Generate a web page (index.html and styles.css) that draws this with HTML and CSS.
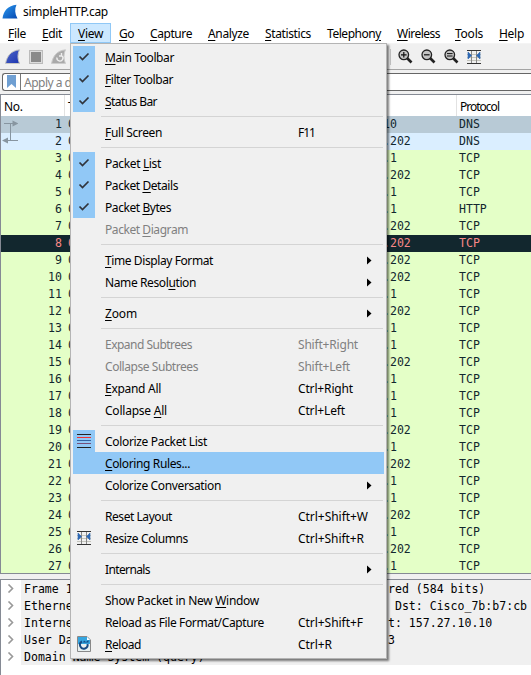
FILE: index.html
```
<!DOCTYPE html>
<html lang="en">
<head>
<meta charset="utf-8">
<title>simpleHTTP.cap</title>
<link rel="stylesheet" href="styles.css">
</head>
<body>
<svg class="defs" width="0" height="0">
  <defs>
    <linearGradient id="finBlue" x1="0" y1="0" x2="1" y2="1"><stop offset="0" stop-color="#2b9cf2"/><stop offset="1" stop-color="#0647b0"/></linearGradient>
    <linearGradient id="finNavy" x1="0" y1="0" x2="1" y2="1"><stop offset="0" stop-color="#5068c8"/><stop offset="1" stop-color="#1c34b0"/></linearGradient>
  </defs>
  <symbol id="resize" viewBox="0 0 14 14">
    <path d="M0 4.500H14M0 7.500H14M0 10.500H14" stroke="#c4c4bc"/>
    <path d="M0 .5H14M0 13.500H14" stroke="#333"/>
    <path d="M4.500 1V13M9.500 1V13" stroke="#888"/>
    <path d="M1 2L4.500 5.500L1 9ZM13 2L9.500 5.500L13 9Z" fill="#2e68b4" stroke="#2e68b4" stroke-width=".6"/>
  </symbol>
  <symbol id="lens" viewBox="0 0 15 15">
    <path d="M9 9L13.500 13.500" stroke="#222" stroke-width="2.600"/>
    <circle cx="5.800" cy="5.800" r="4.800" fill="#c4c4c4" stroke="#222" stroke-width="1.300"/>
  </symbol>
</svg>
<header class="titlebar">
  <svg width="16" height="16" viewBox="0 0 16 16"><path d="M.5 14.500C1.500 7 6 1.500 14.500.8C12.500 5 12.800 10 15.500 14.500Z" fill="url(#finBlue)"/></svg>
  <span data-w="85">simpleHTTP.cap</span>
</header>
<nav class="menubar" id="menubar"></nav>
<div class="toolbar">
  <svg class="tb1" width="16" height="16" viewBox="0 0 16 16"><path d="M.5 14.500C2 7 6 1.500 14.500.8C12.500 5 12.500 10 14.500 14.500Z" fill="url(#finNavy)" stroke="#c8c8c4"/></svg>
  <svg class="tb2" width="14" height="14"><rect x=".5" y=".5" width="13" height="13" fill="#ddd" stroke="#bbb"/><rect x="2" y="2" width="10" height="10" fill="#8a8a8a"/></svg>
  <svg class="tb3" width="16" height="16" viewBox="0 0 16 16"><path d="M.5 14.500C2 7 6 1.500 14.500.8C12.500 5 12.500 10 14.500 14.500Z" fill="#aaa" stroke="#ccc"/><path d="M10.500 6.500A3 3 0 1 1 6 8.500M10.500 4V7H8" fill="none" stroke="#eee" stroke-width="1.400"/></svg>
  <i class="tbsep"></i>
  <svg class="z" width="15" height="15"><use href="#lens"/><path d="M3 5.800H8.600M5.800 3V8.600" stroke="#111" stroke-width="1.200"/></svg>
  <svg class="z" width="15" height="15"><use href="#lens"/><path d="M3 5.800H8.600" stroke="#111" stroke-width="1.200"/></svg>
  <svg class="z" width="15" height="15"><use href="#lens"/><path d="M3 4.600H8.600M3 7H8.600" stroke="#111"/></svg>
  <svg width="14" height="14"><use href="#resize"/></svg>
</div>
<div class="filterbar"><div class="filter">
  <span class="mark"><svg width="9" height="13"><path d="M0 0H9V13L4.500 9L0 13Z" fill="#6f9fd2"/></svg></span>
  <span class="hint">Apply a display filter</span>
</div></div>
<section class="packets">
  <div class="head"><span class="no">No.</span><span class="time">Time</span><span class="dst"></span><span class="proto"><b data-w="39">Protocol</b></span></div>
  <div class="rows" id="rows"></div>
  <svg class="flow" width="17" height="28"><path d="M3 6.500H12M9.500 7V23.500M6 23.500H17" stroke="#8795a0" fill="none"/><path d="M11.500 3.500L17.500 6.500L11.500 9.500ZM7 20.500L1 23.500L7 26.500Z" fill="#8795a0"/></svg>
</section>
<section class="details" id="details"></section>
<div class="menu" id="menu"></div>
<script src="app.js"></script>
</body>
</html>
```
FILE: styles.css
```
* { box-sizing: border-box; }
body { margin: 0; width: 531px; height: 675px; overflow: hidden; background: #f0f0f0; color: #000; font: 12px/16px "Noto Sans", "Open Sans", sans-serif; display: flex; flex-direction: column; position: relative; }
svg { display: block; flex: none; }
.defs { position: absolute; }
span { white-space: pre; }
b { font-weight: 400; }
u { text-decoration: underline; text-decoration-thickness: 1px; text-underline-offset: 2px; }
.titlebar { flex: none; height: 23px; background: #fff; display: flex; align-items: center; gap: 5px; padding: 1px 0 0 2px; }
.menubar { flex: none; height: 21px; background: #fff; border-bottom: 1px solid #f4f4f4; display: flex; }
.menubar > span { height: 20px; line-height: 22px; padding-left: 8px; flex: none; }
.menubar .open { background: #cce8ff; box-shadow: inset 0 0 0 1px #90c8f6; }
.toolbar { flex: none; height: 26px; border-bottom: 1px solid #a4a4a4; display: flex; align-items: center; padding-left: 5px; }
.tb1 { margin-right: 8px; }
.tb2 { margin-right: 8px; }
.tbsep { width: 1px; height: 16px; background: #c4c4c4; margin: 0 7px 0 323px; }
.z { margin-right: 8px; }
.filterbar { flex: none; height: 24px; padding: 3px 0 2px 2px; }
.filter { height: 18px; background: #fff; border: 1px solid #666; border-radius: 3px 0 0 3px; border-right: 0; display: flex; }
.mark { width: 18px; border-right: 1px solid #777; padding: 1px 0 0 4px; }
.hint { color: #808080; padding-left: 3px; line-height: 18px; letter-spacing: -.5px; }
.packets { flex: none; height: 480px; border: solid #858a94; border-width: 1px 0 1px 1px; background: #fff; overflow: hidden; position: relative; }
.head { height: 21px; display: flex; line-height: 23px; }
.head span { border-right: 1px solid #e2e2e2; }
.head .no { width: 64px; padding-left: 3px; letter-spacing: -.3px; }
.head .time { width: 60px; padding-left: 3px; }
.head .dst { width: 332px; flex: none; }
.head .proto { padding-left: 3px; border: 0; }
.row { height: 17px; line-height: 17px; display: flex; background: #e4ffc7; color: #12272e; }
.row, .details { font-family: "DejaVu Sans Mono", monospace; font-size: 11.550px; }
.row.sel { background: #b8cad6; }
.row.dns { background: #daeeff; }
.row.bad { background: #12272e; color: #f78787; }
.row .n { width: 61px; text-align: right; }
.row .t { width: 321px; padding-left: 6px; overflow: hidden; }
.row .d { width: 76px; }
.flow { position: absolute; left: 0; top: 22px; }
.details { flex: none; margin-top: 5px; height: 96px; background: #fff; border: solid #858a94; border-width: 1px 0 0 1px; }
.detail { height: 17px; line-height: 18px; display: flex; }
.detail .tw { width: 20px; padding: 4px 0 0 6px; }
.detail .txt { background: #f0f0f0; flex: 1; padding-left: 3px; display: flex; }
.detail .a { width: 364px; overflow: hidden; }
.menu { position: absolute; left: 70px; top: 43px; width: 317px; height: 616px; background: #f0f0f0; border: 1px solid #b4b4b4; padding: 2px; box-shadow: 2px 2px 2px rgba(0,0,0,.5); }
.item { height: 22px; display: flex; align-items: center; }
.item .ic { width: 22px; height: 22px; display: flex; align-items: center; justify-content: center; }
.item .ic.on { background: #91c8f6; }
.item .lb { width: 203px; padding: 2px 0 0 10px; }
.item .sc { width: 80px; padding-top: 2px; }
.item .sc.sub { width: 69px; }
.item.hot { background: #91c8f6; }
.item.off { color: #808080; }
.sep { height: 9px; padding: 4px 1px 0 28px; }
.sep i { display: block; height: 1px; background: #d4d4d4; }
```
FILE: app.js
```
const get = id => document.getElementById(id);
const label = s => s.replace(/_(.)/, '<u>$1</u>');

get('menubar').innerHTML = [['_File', 34, 18], ['_Edit', 36, 20], ['_View', 41, 25], ['_Go', 31, 15], ['_Capture', 58, 42], ['_Analyze', 57, 41], ['_Statistics', 62, 46], ['Telephon_y', 70, 54], ['_Wireless', 58, 43], ['_Tools', 44, 28], ['_Help', 40, 25]]
  .map(([s, w, t]) => `<span class="${s === '_View' ? 'open' : ''}" style="width:${w}px"><span data-w="${t}">${label(s)}</span></span>`).join('');

const far = [2, 4, 7, 8, 9, 10, 12, 15, 19, 21, 24, 26];
let rows = '';
for (let i = 1; i <= 27; i++) {
  const cls = i === 1 ? 'sel' : i === 2 ? 'dns' : i === 8 ? 'bad' : '';
  const dst = i === 1 ? '10' : far.includes(i) ? '.202' : '.1';
  rows += `<div class="row ${cls}"><span class="n">${i}</span><span class="t">0</span><span class="d">${dst}</span><span>${i < 3 ? 'DNS' : i === 6 ? 'HTTP' : 'TCP'}</span></div>`;
}
get('rows').innerHTML = rows;

get('details').innerHTML = [['Frame 1', 'red (584 bits)'], ['Etherne', ' Dst: Cisco_7b:b7:cb'], ['Interne', 't: 157.27.10.10'], ['User Da', '3'], ['Domain Name System (query)', '']]
  .map(([a, b]) => `<div class="detail"><span class="tw"><svg width="7" height="9"><path d="M1.500 .5L5.500 4.500L1.500 8.500" fill="none" stroke="#999" stroke-width="1.600"/></svg></span><span class="txt"><span class="a">${a}</span><span>${b}</span></span></div>`).join('');

const check = '<svg width="12" height="10"><path d="M1.500 4.500L4.500 7.500L10.500 1.500" fill="none" stroke="#30343c" stroke-width="1.700"/></svg>';
const lines = '<svg width="14" height="14"><path d="M0 .5H14M0 13.500H14" stroke="#222"/><path d="M0 3.500H14" stroke="#e33"/><path d="M0 6.500H14" stroke="#3465a4"/><path d="M0 9.500H14" stroke="#75507b"/></svg>';
const resize = '<svg width="14" height="14"><use href="#resize"/></svg>';
const reload = '<svg width="14" height="16"><path d="M.5 .5H10L13.500 4V15.500H.5Z" fill="#e8f0f0" stroke="#888"/><path d="M1 1H10L13 4V8H1Z" fill="#35a5df"/><path d="M10 1V4H13Z" fill="#fff"/><path d="M10.500 8A3.800 3.800 0 1 1 5 5.500" fill="none" stroke="#164b84" stroke-width="2"/><path d="M6 6.500H11.500V4L9 6L7 4.500Z" fill="#164b84"/></svg>';
const items = [
  ['_Main Toolbar', 69, 'c'], ['_Filter Toolbar', 68, 'c'], ['_Status Bar', 52, 'c'], 0,
  ['_Full Screen', 57, '', 'F11', 17], 0,
  ['Packet _List', 56, 'c'], ['Packet _Details', 73, 'c'], ['Packet _Bytes', 66, 'c'], ['Packet _Diagram', 83, 'd'], 0,
  ['_Time Display Format', 108, '>'], ['Name Resol_ution', 91, '>'], 0,
  ['_Zoom', 32, '>'], 0,
  ['Expand Subtrees', 87, 'd', 'Shift+Right', 60], ['Collapse Subtrees', 93, 'd', 'Shift+Left', 52], ['_Expand All', 56, '', 'Ctrl+Right', 55], ['Collapse _All', 62, '', 'Ctrl+Left', 47], 0,
  ['Colorize Packet List', 102, 'l'], ['_Coloring Rules...', 85, 'h'], ['Colorize Conversation', 116, '>'], 0,
  ['Reset Layout', 67, '', 'Ctrl+Shift+W', 70], ['Resize Columns', 83, 'r', 'Ctrl+Shift+R', 66], 0,
  ['Internals', 45, '>'], 0,
  ['Show Packet in New _Window', 154, ''], ['Reload as File Format/Capture', 159, '', 'Ctrl+Shift+F', 65], ['_Reload', 36, 'x', 'Ctrl+R', 34]
];
const icons = { c: check, l: lines, r: resize, x: reload };
get('menu').innerHTML = items.map(it => {
  if (!it) return '<div class="sep"><i></i></div>';
  const [s, w, k, sc, sw] = it;
  const cls = k === 'd' ? 'off' : k === 'h' ? 'hot' : '';
  const arrow = k === '>' ? '<svg width="5" height="9"><path d="M0 .5L4.500 4.500L0 8.500Z"/></svg>' : '';
  return `<div class="item ${cls}"><span class="ic ${k === 'c' || k === 'l' ? 'on' : ''}">${icons[k] || ''}</span><span class="lb"><span data-w="${w}">${label(s)}</span></span><span class="sc ${arrow ? 'sub' : ''}">${sc ? `<span data-w="${sw}">${sc}</span>` : ''}</span>${arrow}</div>`;
}).join('');

// Spread each label over its column width.
document.querySelectorAll('[data-w]').forEach(el => {
  const r = document.createRange();
  r.selectNodeContents(el);
  el.style.letterSpacing = (el.dataset.w - r.getBoundingClientRect().width) / el.textContent.length + 'px';
});
```
